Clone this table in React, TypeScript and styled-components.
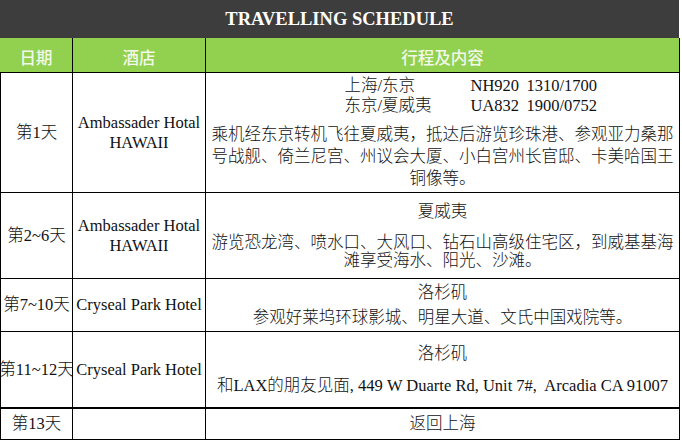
import styled, { createGlobalStyle } from 'styled-components';

const GlobalStyle = createGlobalStyle`
  html, body {
    margin: 0;
    padding: 0;
    background: #ffffff;
  }
`;

const Page = styled.div({
  width: '682px',
  height: '441px',
  overflow: 'hidden',
  background: '#ffffff'
});

const TitleBar = styled.div({
  width: '679px',
  height: '38px',
  display: 'flex',
  alignItems: 'center',
  justifyContent: 'center',
  paddingTop: '1px',
  boxSizing: 'border-box',
  background: '#3d3d3d',
  color: '#ffffff',
  fontFamily: '"Liberation Serif", "Times New Roman", serif',
  fontWeight: 700,
  fontSize: '18.5px'
});

const Sheet = styled.div({
  display: 'grid',
  gridTemplateColumns: '73px 133px 474px',
  width: '680px'
});

const HeadCell = styled.div({
  height: '35px',
  display: 'flex',
  alignItems: 'center',
  justifyContent: 'center',
  paddingTop: '4px',
  boxSizing: 'border-box',
  background: '#92d050',
  borderRight: '1px solid #000',
  borderBottom: '1px solid #000',
  color: '#f1f8e8',
  fontFamily: '"Noto Sans CJK SC", "Noto Sans", sans-serif',
  fontWeight: 500,
  fontSize: '16.5px'
});

const Cell = styled.div<{ $first?: boolean; $height: number; $thick?: boolean }>(
  ({ $first, $height, $thick }) => ({
    height: `${$height}px`,
    display: 'flex',
    flexDirection: 'column',
    alignItems: 'center',
    justifyContent: 'center',
    boxSizing: 'border-box',
    borderLeft: $first ? '1px solid #000' : 'none',
    borderRight: '1px solid #000',
    borderBottom: `${$thick ? 2 : 1}px solid #000`,
    color: '#111',
    fontFamily: '"Liberation Serif", "Noto Sans CJK SC", serif',
    fontWeight: 300,
    fontSize: '16.5px',
    lineHeight: '20px',
    whiteSpace: 'nowrap',
    textAlign: 'center'
  })
);

const Block = styled.div<{ $gap: number }>(({ $gap }) => ({
  display: 'flex',
  flexDirection: 'column',
  alignItems: 'center',
  gap: `${$gap}px`
}));

const Line = styled.div<{ $lh?: number }>(({ $lh }) => ({
  lineHeight: `${$lh ?? 20}px`,
  whiteSpace: 'pre'
}));

const Paragraph = styled.div<{ $lh: number }>(({ $lh }) => ({
  display: 'flex',
  flexDirection: 'column',
  alignItems: 'center',
  lineHeight: `${$lh}px`
}));

const FlightList = styled.div({
  alignSelf: 'stretch',
  paddingLeft: '133px',
  textAlign: 'left'
});

const FlightLine = styled.div({
  display: 'grid',
  gridTemplateColumns: '126px 56px auto',
  lineHeight: '20px'
});

type Row = {
  day: string;
  hotel: string[];
  height: number;
  thick?: boolean;
};

const rows: Row[] = [
  { day: '第1天', hotel: ['Ambassader Hotal', 'HAWAII'], height: 120 },
  { day: '第2~6天', hotel: ['Ambassader Hotal', 'HAWAII'], height: 86 },
  { day: '第7~10天', hotel: ['Cryseal Park Hotel'], height: 53 },
  { day: '第11~12天', hotel: ['Cryseal Park Hotel'], height: 77, thick: true },
  { day: '第13天', hotel: [], height: 31 }
];

const flights = [
  ['上海/东京', 'NH920', '1310/1700'],
  ['东京/夏威夷', 'UA832', '1900/0752']
];

function Plan({ index }: { index: number }) {
  switch (index) {
    case 0:
      return (
        <Block $gap={8}>
          <FlightList>
            {flights.map((f) => (
              <FlightLine key={f[0]}>
                <span>{f[0]}</span>
                <span>{f[1]}</span>
                <span>{f[2]}</span>
              </FlightLine>
            ))}
          </FlightList>
          <Paragraph $lh={22}>
            <span>乘机经东京转机飞往夏威夷，抵达后游览珍珠港、参观亚力桑那</span>
            <span>号战舰、倚兰尼宫、州议会大厦、小白宫州长官邸、卡美哈国王</span>
            <span>铜像等。</span>
          </Paragraph>
        </Block>
      );
    case 1:
      return (
        <Block $gap={12}>
          <Line>夏威夷</Line>
          <Paragraph $lh={18}>
            <span>游览恐龙湾、喷水口、大风口、钻石山高级住宅区，到威基基海</span>
            <span>滩享受海水、阳光、沙滩。</span>
          </Paragraph>
        </Block>
      );
    case 2:
      return (
        <Block $gap={5}>
          <Line>洛杉矶</Line>
          <Line>参观好莱坞环球影城、明星大道、文氏中国戏院等。</Line>
        </Block>
      );
    case 3:
      return (
        <Block $gap={12}>
          <Line>洛杉矶</Line>
          <Line>和LAX的朋友见面, 449 W Duarte Rd, Unit 7#,  Arcadia CA 91007</Line>
        </Block>
      );
    default:
      return <Line>返回上海</Line>;
  }
}

export default function App() {
  return (
    <Page>
      <GlobalStyle />
      <TitleBar>TRAVELLING SCHEDULE</TitleBar>
      <Sheet>
        <HeadCell>日期</HeadCell>
        <HeadCell>酒店</HeadCell>
        <HeadCell>行程及内容</HeadCell>
        {rows.map((row, i) => [
          <Cell key={`d${i}`} $first $height={row.height} $thick={row.thick}>
            {row.day}
          </Cell>,
          <Cell key={`h${i}`} $height={row.height} $thick={row.thick}>
            {row.hotel.map((h) => (
              <Line key={h}>{h}</Line>
            ))}
          </Cell>,
          <Cell key={`p${i}`} $height={row.height} $thick={row.thick}>
            <Plan index={i} />
          </Cell>
        ])}
      </Sheet>
    </Page>
  );
}
